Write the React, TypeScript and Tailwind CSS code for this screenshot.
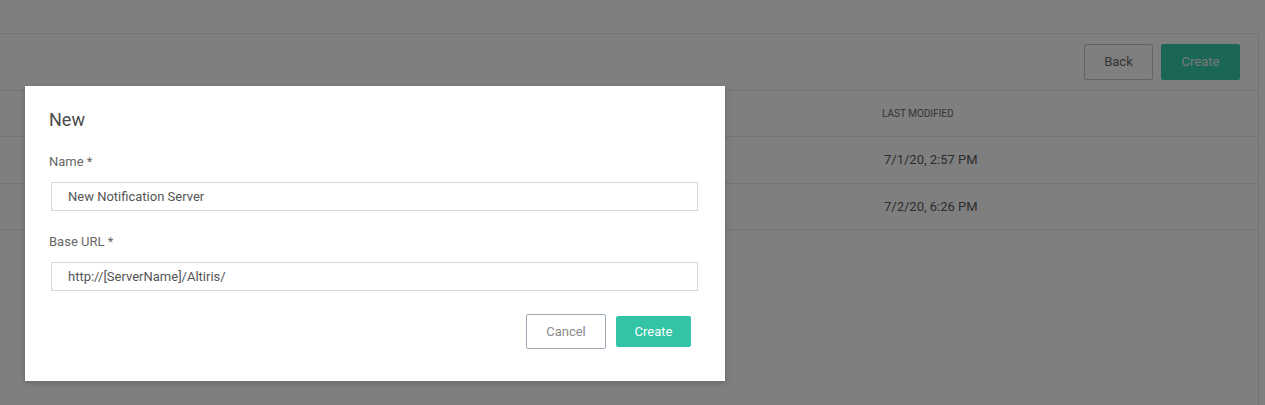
import React from "react";

export default function App() {
  return (
    <div className="relative w-[1265px] h-[405px] overflow-hidden bg-white" style={{ fontFamily: "Roboto, 'Liberation Sans', sans-serif" }}>
      {/* underlying page */}
      <div className="pt-[33px] pl-[2px] w-[1259px]">
        <div className="border-t border-r border-[#e6e6e6] h-[372px]">
          <div className="flex justify-end gap-[8px] pt-[10px] pr-[18px] h-[57px] border-b border-[#e6e6e6]">
            <button className="w-[69px] h-[36px] border border-[#c8c8c8] rounded-[2px] text-[13px] text-[#6a6a6a] bg-white">Back</button>
            <button className="w-[79px] h-[36px] rounded-[2px] text-[13px] text-[#f0f0f0] bg-[#35cdae]">Create</button>
          </div>
          <div className="flex items-center h-[46px] border-b border-[#e6e6e6] pl-[880px] text-[10px] text-[#6a6a6a] uppercase">
            Last Modified
          </div>
          <div className="flex items-center h-[47px] border-b border-[#e6e6e6] pl-[882px] text-[13px] text-[#5a5a5a]">
            7/1/20, 2:57 PM
          </div>
          <div className="flex items-center h-[46px] border-b border-[#e6e6e6] pl-[882px] text-[13px] text-[#5a5a5a]">
            7/2/20, 6:26 PM
          </div>
        </div>
      </div>

      {/* overlay */}
      <div className="absolute inset-0 bg-black/50" />

      {/* modal */}
      <div className="absolute left-[25px] top-[86px] w-[700px] h-[295px] bg-white shadow-[0_2px_6px_rgba(0,0,0,0.2)] px-6 pt-[22px]">
        <div className="text-[18px] leading-[24px] text-[#4a4a4a]">New</div>
        <div className="mt-[21px] text-[13px] leading-[18px] text-[#666]">Name *</div>
        <div className="mt-[11px] ml-[2px] w-[647px] h-[29px] border border-[#d6d6d6] flex items-center pl-[16px] text-[13px] text-[#555]">
          New Notification Server
        </div>
        <div className="mt-[22px] text-[13px] leading-[18px] text-[#666]">Base URL *</div>
        <div className="mt-[11px] ml-[2px] w-[647px] h-[29px] border border-[#d6d6d6] flex items-center pl-[16px] text-[13px] text-[#555]">
          http://[ServerName]/Altiris/
        </div>
        <div className="mt-[23px] flex justify-end items-center gap-[10px] pr-[10px]">
          <button className="w-[80px] h-[35px] border border-[#9eabb6] rounded-[2px] text-[13px] text-[#8a8a8a] bg-white">Cancel</button>
          <button className="w-[75px] h-[31px] rounded-[2px] text-[13px] text-white bg-[#32c4a4]">Create</button>
        </div>
      </div>
    </div>
  );
}
